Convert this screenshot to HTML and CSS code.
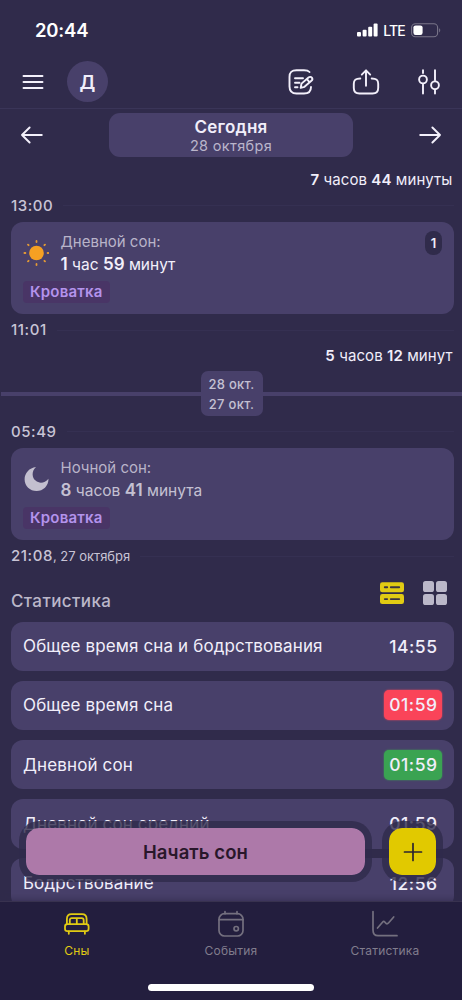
FILE: index.html
```
<!DOCTYPE html>
<html lang="ru">
<head>
<meta charset="utf-8">
<title>Сны</title>
<link rel="stylesheet" href="styles.css">
</head>
<body>
<div class="app">
  <header class="status">
    <span class="clock">20:44</span>
    <svg class="signal" width="21" height="14" viewBox="0 0 21 14" fill="#fff"><rect x="0" y="9" width="4" height="4.600" rx="1"/><rect x="5.600" y="6.800" width="4" height="6.800" rx="1"/><rect x="11.200" y="3.800" width="4" height="9.800" rx="1"/><rect x="16.600" y="0.600" width="4" height="13" rx="1"/></svg>
    <span class="lte">LTE</span>
    <svg class="battery" width="30" height="15" viewBox="0 0 30 15"><rect x=".6" y=".8" width="26" height="13" rx="3.800" fill="none" stroke="#797589" stroke-width="1.100"/><rect x="2.400" y="2.400" width="9.200" height="9.600" rx="2.200" fill="#fff"/><path d="M28.200 5.200c1.400.6 1.400 3.600 0 4.200z" fill="#797589"/></svg>
  </header>

  <nav class="toolbar">
    <svg class="menu" width="22" height="16" viewBox="0 0 22 16" stroke="#f3f0fb" stroke-width="1.900" stroke-linecap="round"><path d="M1.500 2h19M1.500 8h19M1.500 14h19"/></svg>
    <span class="avatar">Д</span>
    <div class="tools">
      <svg width="26" height="28" viewBox="0 0 26 28" fill="none" stroke="#f3f0fb" stroke-width="1.900" stroke-linecap="round" stroke-linejoin="round"><path d="M21.500 4C20.200 2.500 18.500 2.200 16 2.200H8.500C3.500 2.200 1.500 4 1.500 9v9.500c0 5 2 7 7 7H16c5 0 7-2 7-6.500"/><path d="M7 10.200h8M7 14.700h4.500M7 19.200h2.500"/><path d="M12.700 19.900l.8-4.300 7-6.100c1.200-1 2.500-.8 3.300.2s.7 2.200-.4 3.100l-6.900 6zM19 11.200l2.400 2.900"/></svg>
      <svg width="28" height="28" viewBox="0 0 28 28" fill="none" stroke="#f3f0fb" stroke-width="1.900" stroke-linecap="round" stroke-linejoin="round"><path d="M14 17.700V2.500M9.800 6.600L14 2.300l4.200 4.300"/><path d="M8.300 10.500C3.300 10.500 1.800 11.900 1.800 15.800v4.200c0 4 1.700 5.500 5.700 5.500h13c4 0 5.700-1.500 5.700-5.500v-4.200c0-3.900-1.500-5.300-6.500-5.300"/></svg>
      <svg width="24" height="28" viewBox="0 0 24 28" fill="none" stroke="#f3f0fb" stroke-width="1.900" stroke-linecap="round"><path d="M6 2.200v2.800M6 16.500v9M18 2.200v10M18 22.500v3"/><circle cx="6" cy="11.500" r="3.900"/><circle cx="18" cy="17.300" r="3.900"/></svg>
    </div>
  </nav>

  <div class="datebar">
    <svg width="22" height="18" viewBox="0 0 22 18" fill="none" stroke="#f3f0fb" stroke-width="1.900" stroke-linecap="round" stroke-linejoin="round"><path d="M20.800 9H1M8.600 1.500L1 9l7.600 7.500"/></svg>
    <div class="day"><b>Сегодня</b><span>28 октября</span></div>
    <svg width="22" height="18" viewBox="0 0 22 18" fill="none" stroke="#f3f0fb" stroke-width="1.900" stroke-linecap="round" stroke-linejoin="round"><path d="M1.200 9H21M13.400 1.500L21 9l-7.600 7.500"/></svg>
  </div>

  <main class="timeline">
    <p class="awake"><b>7</b> часов <b>44</b> минуты</p>
    <div class="mark"><time>13:00</time><i></i></div>
    <section class="sleep">
      <svg class="glyph" width="26" height="26" viewBox="0 0 26 26"><circle cx="13.500" cy="13" r="7.300" fill="#f5a023"/><g stroke="#e49a35" stroke-width="1.800" stroke-linecap="round"><path d="M13.500 1v1M13.500 24v1M1.400 13h1M24.600 13h1M5 4.600l.6.600M21.400 20.800l.6.600M5 21.400l.6-.6M21.400 5.200l.6-.6"/></g></svg>
      <div class="info"><span class="kind">Дневной сон:</span><span class="length light"><b>1</b> час <b>59</b> минут</span></div>
      <span class="count">1</span>
      <span class="tag">Кроватка</span>
    </section>
    <div class="mark after"><time>11:01</time><i></i></div>
    <p class="awake second"><b>5</b> часов <b>12</b> минут</p>
    <div class="split"><i></i><span>28 окт.<br>27 окт.</span><i></i></div>
    <div class="mark next"><time>05:49</time><i></i></div>
    <section class="sleep">
      <svg class="glyph" width="26" height="26" viewBox="0 0 26 26"><path d="M13 .9C8.200 5.200 9 11.600 12.600 14.600c3.600 3.200 9 2.900 12.900-1.900C25.600 20 20 25 13.600 25 6.900 25 1.600 19.900 1.600 13.200 1.600 7 6.300 1.700 13 .9z" fill="#c3bfcf"/></svg>
      <div class="info"><span class="kind">Ночной сон:</span><span class="length"><b>8</b> часов <b>41</b> минута</span></div>
      <span class="tag">Кроватка</span>
    </section>
    <div class="mark after"><time>21:08<small>, 27 октября</small></time><i></i></div>
  </main>

  <section class="stats">
    <div class="stats-head">
      <h2>Статистика</h2>
      <svg width="24" height="24" viewBox="0 0 24 24"><rect y="1.300" width="24" height="10" rx="2.300" fill="#e1cb13"/><rect y="13.100" width="24" height="10" rx="2.300" fill="#e1cb13"/><path d="M4.800 6.300h2.400M10.800 6.300h8.400M4.800 18.100h2.400M10.800 18.100h8.400" stroke="#3c3541" stroke-width="1.900" stroke-linecap="round"/></svg>
      <svg width="24" height="24" viewBox="0 0 24 24" fill="#bbb8c9"><rect width="11" height="11" rx="2.600"/><rect x="13" width="11" height="11" rx="2.600"/><rect y="13" width="11" height="11" rx="2.600"/><rect x="13" y="13" width="11" height="11" rx="2.600"/></svg>
    </div>
    <div class="row"><span>Общее время сна и бодрствования</span><b>14:55</b></div>
    <div class="row"><span>Общее время сна</span><b class="chip red">01:59</b></div>
    <div class="row"><span>Дневной сон</span><b class="chip green">01:59</b></div>
    <div class="row"><span>Дневной сон средний</span><b>01:59</b></div>
    <div class="row"><span>Бодрствование</span><b>12:56</b></div>
  </section>

  <div class="actions">
    <button class="start">Начать сон</button>
    <button class="add"><svg width="20" height="20" viewBox="0 0 20 20" stroke="#2b2430" stroke-width="1.700" stroke-linecap="round"><path d="M10 1.500v17M1.500 10h17"/></svg></button>
  </div>

  <footer class="tabs">
    <div class="tab active">
      <svg width="28" height="28" viewBox="0 0 28 28" fill="none" stroke="#e1cb13" stroke-width="1.800" stroke-linecap="round" stroke-linejoin="round"><path d="M3.900 13.500V9C3.900 5.500 5.400 4.200 8.500 4.200h10.500c3.100 0 4.600 1.300 4.600 4.800v4.500"/><path d="M6.800 13.800V10.200c0-1.300.8-2 2-2h9.900c1.200 0 2 .7 2 2v3.600M13.800 8.200v5.600"/><rect x="2" y="14.200" width="23.600" height="7" rx="2.400"/><path d="M5.800 21.500v2.300M21.900 21.500v2.300"/></svg>
      <span>Сны</span>
    </div>
    <div class="tab">
      <svg width="28" height="28" viewBox="0 0 28 28" fill="none" stroke="#74707f" stroke-width="1.700" stroke-linecap="round"><rect x="2" y="3.700" width="24" height="22.300" rx="5.500"/><path d="M2 9.700h24M8 1.700v2M20 1.700v2"/><circle cx="19.200" cy="18.700" r="2.200"/></svg>
      <span>События</span>
    </div>
    <div class="tab">
      <svg width="28" height="28" viewBox="0 0 28 28" fill="none" stroke="#74707f" stroke-width="1.700" stroke-linecap="round" stroke-linejoin="round"><path d="M2 1.500V20c0 4 1.500 5.700 5 5.700h19"/><path d="M6.500 18l5-5.800c1-1.200 1.800-.9 2.700.3 1.300 1.700 2.200 1.700 3.500.2l5-5.700"/></svg>
      <span>Статистика</span>
    </div>
    <div class="home"></div>
  </footer>
</div>
</body>
</html>
```
FILE: styles.css
```
* { box-sizing: border-box; }
body { margin: 0; background: #302b4b; }
.app {
  position: relative;
  width: 462px;
  height: 1000px;
  overflow: hidden;
  background: #302b4b;
  color: #f1eefa;
  font-family: Inter, sans-serif;
}
b { font-weight: 600; }
svg { display: block; flex: none; }

.status { height: 56px; padding: 4px 21px 0 35px; display: flex; align-items: center; color: #fff; }
.clock { font-size: 18.5px; font-weight: 600; line-height: 22px; flex: 1; letter-spacing: -.2px; }
.signal { margin-right: 5px; }
.lte { font-size: 14px; font-weight: 500; margin-right: 6px; letter-spacing: -.8px; }

.toolbar { height: 53px; padding: 0 21px 1px 22px; display: flex; align-items: center; border-bottom: 1px solid #3a3558; }
.avatar { margin-left: 23px; width: 41px; height: 41px; border-radius: 50%; background: #48406a; display: grid; place-items: center; font-size: 18.5px; font-weight: 600; }
.tools { margin-left: auto; display: flex; gap: 37.5px; }

.datebar { height: 52px; padding: 0 21px; display: flex; align-items: center; justify-content: space-between; }
.day { width: 244px; height: 44px; border-radius: 11px; background: #48406a; display: flex; flex-direction: column; align-items: center; padding-top: 4px; }
.day b { font-size: 17px; line-height: 20px; letter-spacing: .2px; }
.day span { font-size: 14.5px; line-height: 18px; color: #bab5cb; letter-spacing: .35px; }

.timeline { padding: 0 8px 0 11px; }
.awake { margin: 0 1.5px 0 0; height: 31px; padding-top: 9px; font-size: 15px; line-height: 20px; text-align: right; letter-spacing: .08px; }
.mark { height: 30px; display: flex; align-items: center; gap: 10px; margin-top: -1px; padding-bottom: 1px; }
.mark time { font-size: 15px; font-weight: 500; color: #c8c4d5; letter-spacing: .55px; line-height: 20px; }
.mark small { font-size: 13px; font-weight: 400; letter-spacing: 0; }
.mark i { flex: 1; height: 1px; background: #353052; }
.sleep { height: 92px; margin-top: 1px; border-radius: 12px; background: #48406a; display: grid; grid-template-columns: 37.5px 1fr 29px; grid-template-rows: 59px 26px; padding-left: 12px; width: 443px; }
.glyph { margin-top: 18px; }
.info { display: flex; flex-direction: column; padding-top: 9px; }
.kind { font-size: 15px; line-height: 21px; color: #b9b4c9; }
.length { font-size: 15.5px; line-height: 24px; color: #c4c0d2; }
.length b { font-size: 17px; }
.light { color: #f3f0fb; }
.count { margin-top: 9px; width: 17px; height: 24px; border-radius: 8px; background: #302b4b; font-size: 13px; font-weight: 600; display: grid; place-items: center; }
.tag { grid-column: 1 / 3; grid-row: 2; justify-self: start; height: 22px; border-radius: 4px; background: #493566; color: #b493ec; font-size: 15px; font-weight: 600; line-height: 22px; padding: 0 7px; letter-spacing: .2px; }
.after { margin-top: 2px; height: 29px; }
.second { padding-top: 1px; height: 26px; }
.split { display: flex; align-items: center; height: 45px; margin: 0 -8px 0 -10px; }
.split i { flex: 1; height: 4px; background: #48406a; }
.split span { width: 62px; height: 45px; border-radius: 7px; background: #48406a; color: #c4c0d2; font-size: 13px; font-weight: 500; line-height: 20px; text-align: center; padding-top: 3px; letter-spacing: .3px; }
.next { margin-top: 1px; }

.stats { padding: 0 8px 0 11px; }
.stats-head { height: 50.5px; display: flex; align-items: flex-start; padding: 10px 7px 0 0; gap: 19px; }
h2 { margin: 10px auto 0 0; font-size: 17px; line-height: 20px; font-weight: 500; color: #bbb7c9; letter-spacing: .4px; }
.row { width: 443px; height: 49.5px; margin-bottom: 9.7px; border-radius: 12px; background: #48406a; padding: 0 12px; display: flex; align-items: center; justify-content: space-between; font-size: 17px; white-space: nowrap; letter-spacing: .13px; }
.row b { font-size: 17.5px; font-weight: 500; padding: 0 4.5px 0 5px; letter-spacing: .5px; }
.row .chip { height: 30px; line-height: 30px; border-radius: 5px; }
.red { background: #fa4459; box-shadow: 0 0 2px #fa4459; }
.green { background: #3aa352; box-shadow: 0 0 2px #3aa352; }

.actions { position: absolute; left: 19px; top: 821px; display: flex; gap: 10px; }
.actions button { margin: 0; padding: 0; border: 7px solid rgba(48, 43, 75, .8); background-clip: padding-box; font-family: inherit; display: grid; place-items: center; }
.start { width: 353px; height: 61px; border-radius: 20px; background-color: #ad79a9; color: #29172b; font-size: 18.5px; font-weight: 600; letter-spacing: .1px; }
.add { width: 61px; height: 61px; border-radius: 20px; background-color: #e1c900; }

.tabs { position: absolute; left: 0; bottom: 0; width: 462px; height: 99px; background: #231e3e; border-top: 1px solid #38324f; box-shadow: 0 -1px 7px rgba(48, 43, 75, .8); display: grid; grid-template-columns: repeat(3, 154px); align-content: start; }
.tab { height: 82px; padding-top: 8px; display: flex; flex-direction: column; align-items: center; color: #817d8d; font-size: 12px; line-height: 16px; gap: 5px; letter-spacing: .2px; }
.active { color: #e1cb13; }
.home { grid-column: 1 / 4; justify-self: center; width: 166px; height: 7px; border-radius: 4px; background: #fff; }
```
